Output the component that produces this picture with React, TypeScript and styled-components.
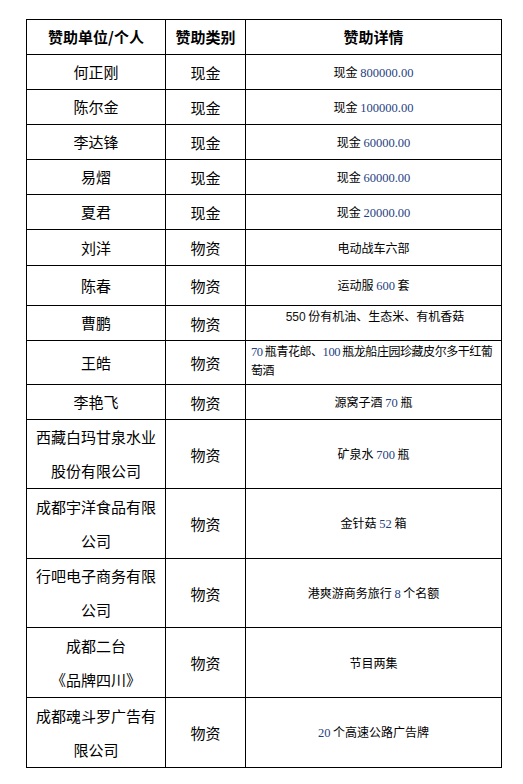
import React from "react";
import styled, { createGlobalStyle } from "styled-components";

const Global = createGlobalStyle`
  html, body { margin: 0; padding: 0; background: #ffffff; }
  body { font-family: "Noto Sans CJK SC", "Noto Sans", sans-serif; color: #000; }
`;

const Page = styled.div`
  padding: 19px 0 0 26px;
`;

const Table = styled.table`
  width: 475px;
  border-collapse: collapse;
  table-layout: fixed;
  border: 1px solid #000;
`;

const Col = styled.col<{ $w: number }>`
  width: ${(p) => p.$w}px;
`;

const HeadCell = styled.th`
  height: 34px;
  padding: 0;
  border: 1px solid #000;
  font-size: 15px;
  font-weight: 700;
  text-align: center;
  vertical-align: middle;
  line-height: 34px;
`;

const NameCell = styled.td<{ $h: number }>`
  height: ${(p) => p.$h}px;
  padding: 0 5px;
  border: 1px solid #000;
  font-size: 15px;
  line-height: 34px;
  text-align: center;
  vertical-align: middle;
`;

const TypeCell = styled.td`
  padding: 0;
  border: 1px solid #000;
  font-size: 15px;
  text-align: center;
  vertical-align: middle;
`;

const DetailCell = styled.td<{ $top?: boolean; $left?: boolean }>`
  padding: ${(p) => (p.$top ? "1px 2px 0 5px" : "0 5px")};
  border: 1px solid #000;
  font-size: 12px;
  line-height: 18px;
  text-align: ${(p) => (p.$left ? "left" : "center")};
  vertical-align: ${(p) => (p.$top ? "top" : "middle")};
`;

const Line = styled.span`
  display: block;
  white-space: nowrap;
  letter-spacing: -0.45px;
`;

const Num = styled.span`
  font-family: "Liberation Serif", "Times New Roman", serif;
  font-size: 12.5px;
  color: #1f3f82;
`;

const Plain = styled.span`
  font-family: "Liberation Sans", Arial, sans-serif;
  color: #111;
`;

type Row = {
  name: React.ReactNode;
  type: string;
  detail: React.ReactNode;
  h: number;
  top?: boolean;
  left?: boolean;
};

const rows: Row[] = [
  { name: "何正刚", type: "现金", detail: <>现金 <Num>800000.00</Num></>, h: 34 },
  { name: "陈尔金", type: "现金", detail: <>现金 <Num>100000.00</Num></>, h: 34 },
  { name: "李达锋", type: "现金", detail: <>现金 <Num>60000.00</Num></>, h: 34 },
  { name: "易熠", type: "现金", detail: <>现金 <Num>60000.00</Num></>, h: 34 },
  { name: "夏君", type: "现金", detail: <>现金 <Num>20000.00</Num></>, h: 34 },
  { name: "刘洋", type: "物资", detail: "电动战车六部", h: 35 },
  { name: "陈春", type: "物资", detail: <>运动服 <Num>600</Num> 套</>, h: 39 },
  { name: "曹鹏", type: "物资", detail: <><Plain>550</Plain> 份有机油、生态米、有机香菇</>, h: 34, top: true },
  {
    name: "王皓",
    type: "物资",
    detail: (
      <>
        <Line>
          <Num>70</Num> 瓶青花郎、<Num>100</Num> 瓶龙船庄园珍藏皮尔多干红葡
        </Line>
        <Line>萄酒</Line>
      </>
    ),
    h: 43,
    top: true,
    left: true,
  },
  { name: "李艳飞", type: "物资", detail: <>源窝子酒 <Num>70</Num> 瓶</>, h: 34 },
  { name: "西藏白玛甘泉水业股份有限公司", type: "物资", detail: <>矿泉水 <Num>700</Num> 瓶</>, h: 68 },
  { name: "成都宇洋食品有限公司", type: "物资", detail: <>金针菇 <Num>52</Num> 箱</>, h: 69 },
  { name: "行吧电子商务有限公司", type: "物资", detail: <>港爽游商务旅行 <Num>8</Num> 个名额</>, h: 68 },
  { name: <>成都二台<br />《品牌四川》</>, type: "物资", detail: "节目两集", h: 69 },
  { name: "成都魂斗罗广告有限公司", type: "物资", detail: <><Num>20</Num> 个高速公路广告牌</>, h: 69 },
];

export default function App() {
  return (
    <>
      <Global />
      <Page>
        <Table>
          <colgroup>
            <Col $w={139} />
            <Col $w={80} />
            <Col $w={256} />
          </colgroup>
          <thead>
            <tr>
              <HeadCell>赞助单位/个人</HeadCell>
              <HeadCell>赞助类别</HeadCell>
              <HeadCell>赞助详情</HeadCell>
            </tr>
          </thead>
          <tbody>
            {rows.map((r, i) => (
              <tr key={i}>
                <NameCell $h={r.h}>{r.name}</NameCell>
                <TypeCell>{r.type}</TypeCell>
                <DetailCell $top={r.top} $left={r.left}>
                  {r.detail}
                </DetailCell>
              </tr>
            ))}
          </tbody>
        </Table>
      </Page>
    </>
  );
}
